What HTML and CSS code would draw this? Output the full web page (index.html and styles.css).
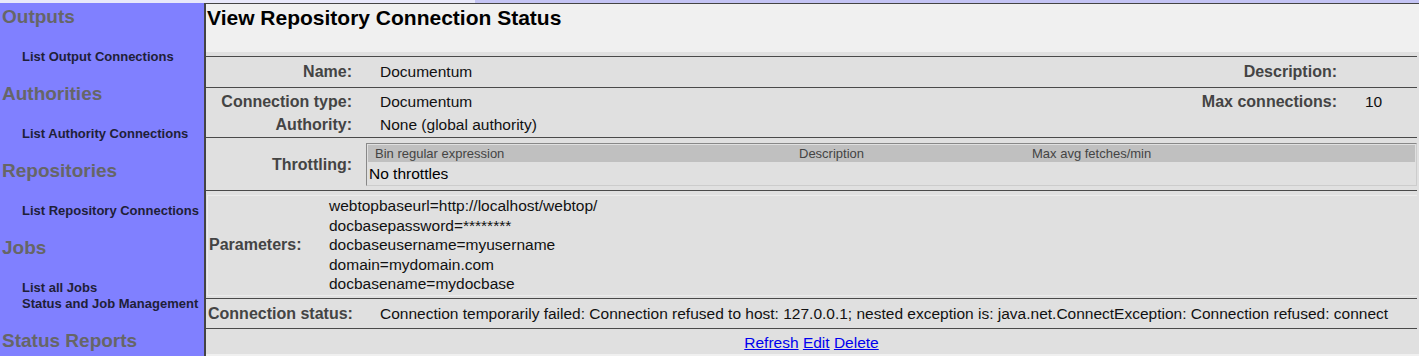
FILE: index.html
```html
<!DOCTYPE html>
<html lang="en">
<head>
    <meta charset="UTF-8">
    <title>Apache ManifoldCF: View Repository Connection Status</title>
    <link rel="stylesheet" href="styles.css">
</head>
<body>
    <div class="topbar"><div class="topbar-light"></div></div>
    <div class="page">
        <div class="menu">
            <div class="menu-header">Outputs</div>
            <ul class="menu-items">
                <li><a href="#">List Output Connections</a></li>
            </ul>
            <div class="menu-header">Authorities</div>
            <ul class="menu-items">
                <li><a href="#">List Authority Connections</a></li>
            </ul>
            <div class="menu-header">Repositories</div>
            <ul class="menu-items">
                <li><a href="#">List Repository Connections</a></li>
            </ul>
            <div class="menu-header">Jobs</div>
            <ul class="menu-items">
                <li><a href="#">List all Jobs</a></li>
                <li><a href="#">Status and Job Management</a></li>
            </ul>
            <div class="menu-header">Status Reports</div>
        </div>

        <div class="main">
            <div class="heading-box">
                <h1>View Repository Connection Status</h1>
            </div>

            <div class="display">
                <div class="separator"></div>
                <div class="row row-name">
                    <div class="label">Name:</div>
                    <div class="value">Documentum</div>
                    <div class="label">Description:</div>
                    <div class="value"></div>
                </div>
                <div class="separator"></div>
                <div class="row row-type">
                    <div class="label">Connection type:<br>Authority:</div>
                    <div class="value">Documentum<br>None (global authority)</div>
                    <div class="label">Max connections:</div>
                    <div class="value">10</div>
                </div>
                <div class="separator"></div>
                <div class="row row-throttle">
                    <div class="label">Throttling:</div>
                    <table class="throttles">
                        <tr class="throttles-head">
                            <th class="col-bin">Bin regular expression</th>
                            <th class="col-desc">Description</th>
                            <th>Max avg fetches/min</th>
                        </tr>
                        <tr>
                            <td colspan="3">No throttles</td>
                        </tr>
                    </table>
                </div>
                <div class="separator"></div>
                <div class="params">
                    <div class="params-label">Parameters:</div>
                    <div class="params-list">
                        <div>webtopbaseurl=http://localhost/webtop/</div>
                        <div>docbasepassword=********</div>
                        <div>docbaseusername=myusername</div>
                        <div>domain=mydomain.com</div>
                        <div>docbasename=mydocbase</div>
                    </div>
                </div>
                <div class="separator"></div>
                <div class="status">
                    <div class="status-label">Connection status:</div>
                    <div class="value">Connection temporarily failed: Connection refused to host: 127.0.0.1; nested exception is: java.net.ConnectException: Connection refused: connect</div>
                </div>
                <div class="separator"></div>
                <div class="buttons">
                    <a href="#">Refresh</a> <a href="#">Edit</a> <a href="#">Delete</a>
                </div>
            </div>
        </div>
    </div>
</body>
</html>
```

FILE: styles.css
```css
body {
    margin: 0;
    font-family: "Liberation Sans", Arial, sans-serif;
    background-color: #f0f0f0;
    overflow: hidden;
}
.topbar {
    height: 3px;
    background-color: #c4c4f4;
    display: flex;
}
.topbar-light {
    width: 475px;
    background-color: #e8e8fa;
}
.page {
    display: flex;
    height: 353px;
}
.menu {
    width: 204px;
    flex: none;
    background-color: #8080ff;
    border-right: 2px solid #444;
}
.menu-header {
    color: #666;
    font-size: 19px;
    font-weight: bold;
    line-height: 22px;
    padding-left: 2px;
    margin-top: 3px;
    margin-bottom: 21px;
}
.menu-items {
    list-style: none;
    margin: 0 0 18px 0;
    padding-left: 22px;
}
.menu-items li {
    font-size: 13px;
    line-height: 16px;
}
.menu-items a {
    color: #202038;
    font-weight: bold;
    text-decoration: none;
}
.main {
    flex: 1;
    border-top: 1px solid #444;
}
.heading-box {
    height: 48px;
    background-color: #f0f0f0;
    padding-left: 1px;
}
h1 {
    margin: 0;
    padding-top: 3px;
    font-size: 21px;
    line-height: 22px;
    color: #000;
}
.display {
    background-color: #e0e0e0;
    padding-top: 4px;
    padding-right: 2px;
}
.separator {
    height: 1px;
    background-color: #4a4a4a;
}
.row {
    display: grid;
    grid-template-columns: 146px 1fr auto 52px;
    column-gap: 28px;
    font-size: 15.5px;
    line-height: 23px;
}
.label {
    text-align: right;
    font-size: 16px;
    font-weight: bold;
    color: #444;
}
.value {
    color: #111;
}
.row-name {
    padding: 3px 0 4px;
}
.row-type {
    padding: 2px 0 1px;
}
.row-throttle {
    grid-template-columns: 146px 1fr;
    column-gap: 14px;
    align-items: center;
    padding: 5px 0 4px;
}
.throttles {
    border: 1px solid #888;
    border-right-color: #ccc;
    border-bottom-color: #ccc;
    border-collapse: separate;
    border-spacing: 0;
    padding: 1px;
    width: 100%;
    table-layout: fixed;
}
.throttles th {
    background-color: #c0c0c0;
    color: #444;
    font-size: 13px;
    font-weight: normal;
    line-height: 17px;
    text-align: left;
    padding: 0 0 0 7px;
}
.throttles th.col-bin {
    width: 417px;
}
.throttles th.col-desc {
    width: 226px;
}
.throttles td {
    font-size: 15.5px;
    line-height: 20px;
    padding: 2px 0 0 1px;
    color: #000;
}
.params {
    display: flex;
    align-items: center;
    margin: 4px 0 2px 1px;
    border: 1px solid #ececec;
    border-right: none;
    font-size: 15.5px;
}
.params-label {
    width: 120px;
    padding-left: 1px;
    font-size: 16px;
    font-weight: bold;
    color: #444;
}
.params-list {
    line-height: 19.5px;
    color: #111;
    padding: 0 0 1px 0;
}
.status {
    display: grid;
    grid-template-columns: 146px 1fr;
    column-gap: 26px;
    font-size: 15.5px;
    line-height: 23px;
    padding: 3px 0 3px 2px;
}
.status-label {
    font-size: 16px;
    font-weight: bold;
    color: #444;
}
.buttons {
    text-align: center;
    font-size: 15.5px;
    line-height: 23px;
    padding-top: 2px;
}
.buttons a {
    color: #0000ee;
}
```
